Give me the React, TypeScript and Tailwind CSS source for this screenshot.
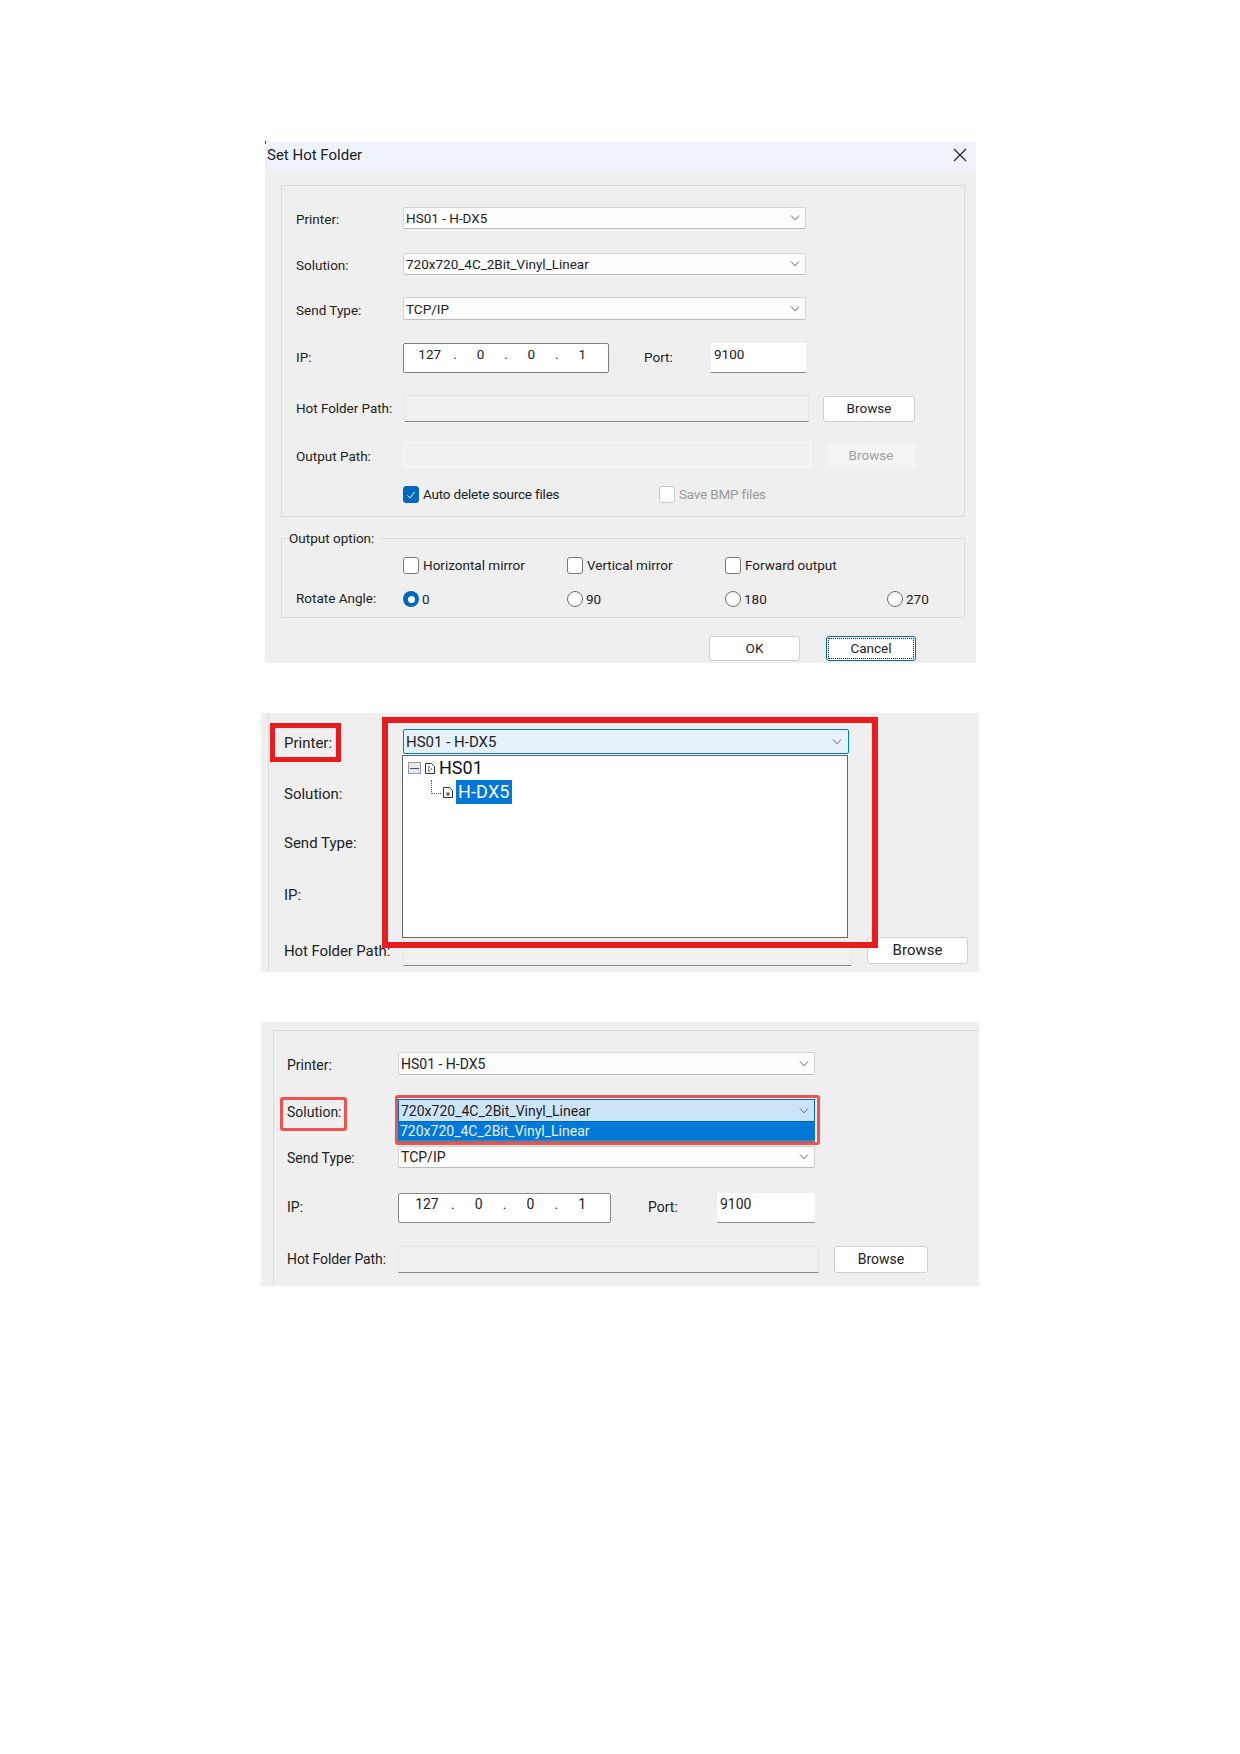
import type { ReactNode } from "react";

function Chevron({ className = "" }: { className?: string }) {
  return (
    <svg viewBox="0 0 10 6" className={`w-[10px] h-[6px] ${className}`} fill="none" stroke="#666" strokeWidth="1">
      <path d="M1 0.5 L5 4.8 L9 0.5" />
    </svg>
  );
}

function Combo({ value, className = "" }: { value: string; className?: string }) {
  return (
    <div className={`flex items-center justify-between border border-[#d4d4d4] border-b-[#bcbcbc] bg-[#fdfdfd] rounded-[2px] pl-[2px] pr-[5px] ${className}`}>
      <span className="pt-[1px]">{value}</span>
      <Chevron />
    </div>
  );
}

function IpBox({ className = "" }: { className?: string }) {
  const parts = ["127", ".", "0", ".", "0", ".", "1"];
  return (
    <div className={`flex bg-white rounded-[2px] ${className}`}>
      {parts.map((p, i) => (
        <span key={i} className="flex-1 text-center">{p}</span>
      ))}
    </div>
  );
}

function PortBox({ className = "" }: { className?: string }) {
  return <div className={`bg-white border-b border-b-[#8a8a8a] pl-[3px] pt-[1px] ${className}`}>9100</div>;
}

function Btn({ children, className = "" }: { children: ReactNode; className?: string }) {
  return (
    <div className={`flex items-center justify-center bg-white border border-[#d0d0d0] rounded-[3px] ${className}`}>
      {children}
    </div>
  );
}

function Check({ label, checked, disabled, tight }: { label: string; checked?: boolean; disabled?: boolean; tight?: boolean }) {
  return (
    <div className={`flex items-center gap-[4px] ${disabled ? "text-[#9a9a9a]" : ""}`}>
      <div className={`w-[16px] h-[17px] rounded-[3px] flex items-center justify-center border ${checked ? "bg-[#0067c0] border-[#0067c0]" : disabled ? "bg-white border-[#c8c8c8]" : "bg-white border-[#7a7a7a]"}`}>
        {checked && (
          <svg viewBox="0 0 10 10" className="w-[10px] h-[10px]" fill="none" stroke="#fff" strokeWidth="1">
            <path d="M1.5 5.5 L4 8 L8.5 2" />
          </svg>
        )}
      </div>
      <span className={tight ? "tracking-[-0.2px]" : ""}>{label}</span>
    </div>
  );
}

function Radio({ label, checked }: { label: string; checked?: boolean }) {
  return (
    <div className="flex items-center gap-[3px]">
      {checked ? (
        <div className="w-[16px] h-[16px] rounded-full bg-[#0067c0] flex items-center justify-center">
          <div className="w-[7px] h-[7px] rounded-full bg-white" />
        </div>
      ) : (
        <div className="w-[16px] h-[16px] rounded-full bg-white border border-[#6f6f6f]" />
      )}
      <span>{label}</span>
    </div>
  );
}

function DocIcon({ className = "", star }: { className?: string; star?: boolean }) {
  return (
    <svg viewBox="0 0 10 11" className={`w-[10px] h-[11px] ${className}`} fill="#fff" stroke="#333" strokeWidth="1">
      <path d="M0.5 0.5 H6.5 L9.5 3.5 V10.5 H0.5 Z" />
      {star ? (
        <path d="M5 5 V9 M3 7 H7 M3.5 5.5 L6.5 8.5 M6.5 5.5 L3.5 8.5" strokeWidth="0.7" />
      ) : (
        <path d="M3 4 H5 M5.5 6 H7 M3 6 H4 M3 8 H5" strokeWidth="1" />
      )}
    </svg>
  );
}

function SetHotFolder() {
  return (
    <div className="relative ml-[265px] w-[711px] h-[521px] bg-[#efefef] flex flex-col">
      <div className="absolute left-0 -top-[1px] w-[1px] h-[3px] bg-[#444]" />
      <div className="h-[28px] bg-[#eef3fb] flex items-center justify-between pl-[2px] pr-[9px] text-[15px]">
        <span className="-mt-[2px]">Set Hot Folder</span>
        <svg viewBox="0 0 14 14" className="w-[14px] h-[14px] -mt-[2px]" fill="none" stroke="#222" strokeWidth="1.2">
          <path d="M1 1 L13 13 M13 1 L1 13" />
        </svg>
      </div>

      <div className="mt-[15px] ml-[16px] w-[684px] h-[332px] border border-[#dcdcdc] pl-[14px] flex flex-col">
        <div className="mt-[21px] flex items-center h-[22px]">
          <span className="w-[107px] pt-[3px]">Printer:</span>
          <Combo value="HS01 - H-DX5" className="w-[403px] h-full" />
        </div>
        <div className="mt-[24px] flex items-center h-[22px]">
          <span className="w-[107px] pt-[3px]">Solution:</span>
          <Combo value="720x720_4C_2Bit_Vinyl_Linear" className="w-[403px] h-full" />
        </div>
        <div className="mt-[22px] flex items-center h-[23px]">
          <span className="w-[107px] pt-[3px]">Send Type:</span>
          <Combo value="TCP/IP" className="w-[403px] h-full" />
        </div>
        <div className="mt-[23px] flex items-center h-[30px]">
          <span className="w-[107px] -mt-[2px]">IP:</span>
          <IpBox className="w-[206px] h-full border border-[#7f7f7f] px-[13px]" />
          <span className="ml-[35px] w-[67px] -mt-[2px]">Port:</span>
          <PortBox className="w-[95px] h-full" />
        </div>
        <div className="mt-[22px] flex items-center h-[27px]">
          <span className="w-[108px] tracking-[-0.05px]">Hot Folder Path:</span>
          <div className="w-[405px] h-full bg-[#f0f0f0] border border-[#e6e6e6] border-b-[#8a8a8a]" />
          <Btn className="ml-[14px] w-[92px] h-[26px]">Browse</Btn>
        </div>
        <div className="mt-[20px] flex items-center h-[26px]">
          <span className="w-[107px] pt-[2px]">Output Path:</span>
          <div className="w-[408px] h-full bg-[#f0f0f0] border border-[#fafafa]" />
          <Btn className="ml-[15px] w-[90px] h-[25px] !bg-[#f4f4f4] !border-[#f0f0f0] text-[#a0a0a0]">Browse</Btn>
        </div>
        <div className="mt-[18px] flex items-center h-[17px] pl-[107px]">
          <div className="w-[256px]">
            <Check label="Auto delete source files" checked tight />
          </div>
          <Check label="Save BMP files" disabled tight />
        </div>
      </div>

      <div className="relative mt-[21px] ml-[16px] w-[684px] h-[80px] border border-[#dcdcdc] pl-[14px] flex flex-col">
        <span className="absolute left-[7px] -top-[11px] bg-[#efefef] pr-[6px]">Output option:</span>
        <div className="mt-[18px] flex items-center h-[17px] pl-[107px]">
          <div className="w-[164px]"><Check label="Horizontal mirror" /></div>
          <div className="w-[158px]"><Check label="Vertical mirror" /></div>
          <Check label="Forward output" />
        </div>
        <div className="mt-[17px] flex items-center h-[16px]">
          <span className="w-[107px] -mt-[2px]">Rotate Angle:</span>
          <div className="w-[164px]"><Radio label="0" checked /></div>
          <div className="w-[158px]"><Radio label="90" /></div>
          <div className="w-[162px]"><Radio label="180" /></div>
          <Radio label="270" />
        </div>
      </div>

      <div className="mt-[18px] ml-[444px] flex">
        <Btn className="w-[91px] h-[25px]">OK</Btn>
        <div className="ml-[26px] w-[90px] h-[25px] bg-white border border-[#0067c0] rounded-[3px] p-[1px]">
          <div className="w-full h-full flex items-center justify-center border border-dotted border-[#222]">Cancel</div>
        </div>
      </div>
    </div>
  );
}

function PrinterDropdown() {
  return (
    <div className="relative mt-[50px] ml-[261px] w-[718px] h-[259px] bg-[#efefef] text-[15px]">
      <div className="h-full ml-[7px] border-l border-l-[#dddddd] pl-[15px] pt-[16px] flex flex-col">
        <div className="flex items-center h-[25px]">
          <span className="w-[119px] pt-[3px]">Printer:</span>
          <div className="w-[446px] h-full flex items-center justify-between bg-[#e5f1fb] border border-[#0078d7] rounded-[2px] pl-[2px] pr-[6px]">
            <span className="pt-[1px]">HS01 - H-DX5</span>
            <Chevron />
          </div>
        </div>
        <div className="mt-[27px] h-[24px] flex items-center pt-[3px]">Solution:</div>
        <div className="mt-[26px] h-[24px] flex items-center pt-[1px]">Send Type:</div>
        <div className="mt-[28px] h-[24px] flex items-center">IP:</div>
        <div className="mt-[30px] flex items-center h-[29px]">
          <span className="w-[119px] tracking-[-0.1px]">Hot Folder Path:</span>
          <div className="w-[449px] h-full bg-[#f0f0f0] border border-[#e6e6e6] border-b-[#8a8a8a]" />
          <Btn className="ml-[15px] w-[101px] h-[27px] self-start">Browse</Btn>
        </div>
      </div>

      <div className="absolute left-[141px] top-[42px] w-[446px] h-[183px] bg-white border border-[#666] text-[18px] leading-none">
        <div className="flex items-center h-[24px]">
          <div className="ml-[5px] w-[13px] h-[12px] border border-[#9a9a9a] bg-[#e8e8e8] flex items-center justify-center">
            <div className="w-[9px] h-[1px] bg-[#30508a]" />
          </div>
          <DocIcon className="ml-[4px]" />
          <span className="ml-[4px] text-[#111]">HS01</span>
        </div>
        <div className="relative flex items-center h-[24px] pl-[40px]">
          <div className="absolute left-[28px] top-0 w-[10px] h-[14px] border-l border-b border-dotted border-[#555]" />
          <DocIcon star />
          <span className="ml-[3px] h-full px-[2px] flex items-center bg-[#0078d7] text-white tracking-[0.15px]">H-DX5</span>
        </div>
      </div>

      <div className="absolute left-[9px] top-[10px] w-[71px] h-[39px] border-[5px] border-[#e81c1c]" />
      <div className="absolute left-[121px] top-[4px] w-[496px] h-[231px] border-[6px] border-[#e81c1c]" />
    </div>
  );
}

function SolutionDropdown() {
  return (
    <div className="relative mt-[50px] ml-[261px] w-[718px] h-[264px] bg-[#efefef] text-[14px] pl-[12px] pt-[8px]">
      <div className="h-full border-t border-l border-[#dcdcdc] pl-[13px] flex flex-col">
        <div className="mt-[21px] flex items-center h-[23px]">
          <span className="w-[111px] pt-[3px]">Printer:</span>
          <Combo value="HS01 - H-DX5" className="w-[417px] h-full" />
        </div>
        <div className="mt-[24px] flex items-center h-[23px]">
          <span className="w-[111px] pt-[3px]">Solution:</span>
          <div className="w-[417px] h-full flex items-center justify-between bg-[#cce4f7] border border-[#0067c0] pl-[2px] pr-[5px]">
            <span className="pt-[1px]">720x720_4C_2Bit_Vinyl_Linear</span>
            <Chevron />
          </div>
        </div>
        <div className="mt-[24px] flex items-center h-[22px]">
          <span className="w-[111px] pt-[3px]">Send Type:</span>
          <Combo value="TCP/IP" className="w-[417px] h-full" />
        </div>
        <div className="mt-[25px] flex items-center h-[30px]">
          <span className="w-[111px] -mt-[1px]">IP:</span>
          <IpBox className="w-[213px] h-full border border-[#8a8a8a] px-[15px]" />
          <span className="ml-[37px] w-[69px] -mt-[1px]">Port:</span>
          <PortBox className="w-[98px] h-full" />
        </div>
        <div className="mt-[23px] flex items-center h-[27px]">
          <span className="w-[111px] tracking-[-0.1px]">Hot Folder Path:</span>
          <div className="w-[421px] h-full bg-[#f0f0f0] border border-[#e6e6e6] border-b-[#8a8a8a]" />
          <Btn className="ml-[15px] w-[94px] h-full">Browse</Btn>
        </div>
      </div>

      <div className="absolute left-[137px] top-[100px] w-[417px] h-[20px] bg-[#0078d7] text-[#e8f2fb] pl-[2px] flex items-center border-b-2 border-b-[#5a7fa0]">
        720x720_4C_2Bit_Vinyl_Linear
      </div>
      <div className="absolute left-[19px] top-[75px] w-[67px] h-[34px] border-[3px] border-[#ef5350] rounded-[3px]" />
      <div className="absolute left-[134px] top-[73px] w-[425px] h-[50px] border-[3px] border-[#ef5350] rounded-[3px]" />
    </div>
  );
}

export default function App() {
  return (
    <div className="min-h-[1754px] bg-white pt-[142px] font-['Roboto',sans-serif] text-[13.5px] text-[#222]">
      <SetHotFolder />
      <PrinterDropdown />
      <SolutionDropdown />
    </div>
  );
}
